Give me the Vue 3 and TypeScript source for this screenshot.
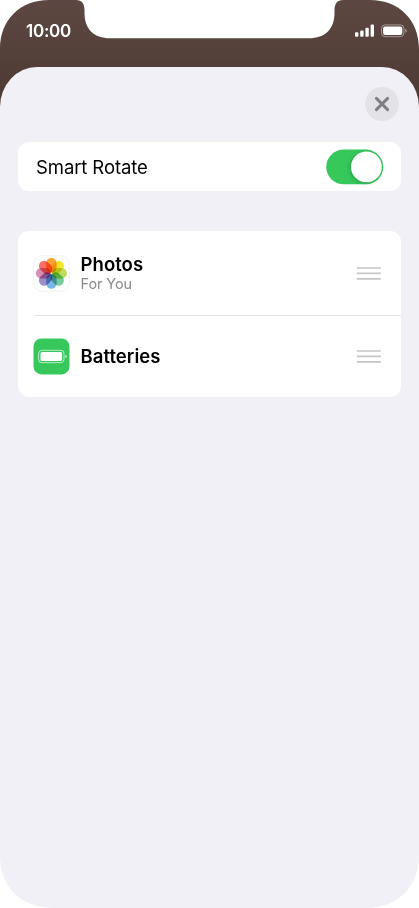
<script setup lang="ts">
import { ref } from 'vue'

interface Petal { angle: number; color: string }

const smartRotate = ref(true)
const petals: Petal[] = [
  { angle: 0, color: '#fba336' },
  { angle: 45, color: '#f4e52b' },
  { angle: 90, color: '#bcdb60' },
  { angle: 135, color: '#78ca9f' },
  { angle: 180, color: '#78b7e6' },
  { angle: 225, color: '#9d8fc6' },
  { angle: 270, color: '#d88eb5' },
  { angle: 315, color: '#f87065' },
]
const rows = [
  { id: 'photos', title: 'Photos', subtitle: 'For You' },
  { id: 'batteries', title: 'Batteries', subtitle: '' },
]
</script>

<template>
  <main class="phone">
    <header class="status">
      <span class="time">10:00</span>
      <span class="indicators">
        <svg width="20" height="14" viewBox="0 0 20 14" fill="#fff">
          <rect x="0" y="8.2" width="3.4" height="4.5" rx="1" />
          <rect x="5.2" y="6.4" width="3.4" height="6.3" rx="1" />
          <rect x="10.4" y="3.8" width="3.4" height="8.9" rx="1" />
          <rect x="15.6" y="0.6" width="3.4" height="12.1" rx="1" />
        </svg>
        <svg width="27" height="14" viewBox="0 0 27 14">
          <rect x="0.5" y="0.9" width="22.4" height="11.8" rx="3.5" fill="none" stroke="#fff" stroke-opacity=".45" />
          <rect x="2.1" y="2.5" width="19.2" height="8.6" rx="2" fill="#fff" />
          <path d="M24.4 4.8c1.8.7 1.8 3.3 0 4z" fill="#fff" fill-opacity=".5" />
        </svg>
      </span>
    </header>
    <section class="sheet">
      <div class="toolbar">
        <button class="close" aria-label="Close">
          <svg width="34" height="34" viewBox="0 0 34 34">
            <path d="M11.4 11.4 22.6 22.6M22.6 11.4 11.4 22.6" stroke="#7f7f83" stroke-width="2.9" stroke-linecap="round" />
          </svg>
        </button>
      </div>
      <div class="card setting">
        <span class="label">Smart Rotate</span>
        <button class="switch" :class="{ on: smartRotate }" role="switch" :aria-checked="smartRotate" @click="smartRotate = !smartRotate">
          <svg class="track" width="58" height="36" viewBox="0 0 58 36">
            <rect class="fill" x=".2" y=".6" width="57" height="34.6" rx="17.3" />
            <circle class="knob" cx="40.4" cy="17.9" r="15.4" fill="#fff" />
          </svg>
        </button>
      </div>
      <div class="card list">
        <div v-for="row in rows" :key="row.id" class="row" :class="row.id">
          <svg v-if="row.id === 'photos'" class="app" width="37" height="37" viewBox="0 0 37 37">
            <rect x=".8" y=".8" width="35.4" height="35.4" rx="8" fill="#fff" stroke="#ededef" stroke-width=".8" />
            <g transform="translate(18.4 18.2)">
              <rect
                v-for="petal in petals" :key="petal.angle" class="petal"
                x="-5.2" y="-15.5" width="10.4" height="14.8" rx="5.2"
                :fill="petal.color" :transform="`rotate(${petal.angle})`"
              />
            </g>
          </svg>
          <svg v-else class="app" width="37" height="37" viewBox="0 0 37 37">
            <rect x=".5" y=".4" width="36" height="36" rx="8" fill="#36c85b" />
            <rect x="5.6" y="12.3" width="25.4" height="12.4" rx="3.3" fill="none" stroke="#fff" stroke-opacity=".75" stroke-width=".9" />
            <rect x="7.5" y="14.1" width="21.6" height="8.8" rx="1.5" fill="#fff" />
            <path d="M32.5 16.8c1.7.5 1.7 3 0 3.5z" fill="#fff" fill-opacity=".8" />
          </svg>
          <div class="copy">
            <span class="title">{{ row.title }}</span>
            <span v-if="row.subtitle" class="subtitle">{{ row.subtitle }}</span>
          </div>
          <svg class="handle" width="25" height="15" viewBox="0 0 25 15">
            <path d="M.8 2h24M.8 7.4h24M.8 12.8h24" stroke="#c5c5c7" stroke-width="1.7" />
          </svg>
        </div>
      </div>
    </section>
    <svg class="bezel" width="419" height="908" viewBox="0 0 419 908" fill="#fff">
      <path d="M76 0C82 0 84.5 4 84.5 10V13C84.5 29 94 38.3 110 38.3H309C325 38.3 334.5 29 334.5 13V10C334.5 4 337 0 343 0Z" />
      <path d="M0 0H49C20 0 0 20 0 49Z" />
      <path d="M419 0H370C399 0 419 20 419 49Z" />
      <path d="M0 908V855C0 888 22 908 53 908Z" />
      <path d="M419 908V855C419 888 397 908 366 908Z" />
    </svg>
  </main>
</template>

<style>
body { margin: 0; background: #fff; }
</style>

<style scoped>
.phone {
  position: relative;
  display: flex;
  flex-direction: column;
  width: 419px;
  height: 908px;
  overflow: hidden;
  background: linear-gradient(#5d4742 0, #4c3932 110px);
  font-family: Inter, "Liberation Sans", sans-serif;
  color: #000;
}
.status {
  display: flex;
  justify-content: space-between;
  height: 67px;
  padding: 0 11px 0 26px;
  box-sizing: border-box;
  color: #fff;
}
.time { margin-top: 20px; font-size: 17px; line-height: 22px; font-weight: 600; letter-spacing: -.25px; }
.indicators { display: flex; gap: 6px; padding-top: 24px; }
.sheet {
  flex: 1;
  padding: 20px 18px 0;
  background: #f1f0f6;
  border-radius: 37px 37px 0 0 / 40px 40px 0 0;
}
.toolbar { display: flex; justify-content: flex-end; height: 55px; padding-right: 2px; }
button { border: 0; padding: 0; background: none; }
.close { width: 34px; height: 34px; border-radius: 50%; background: #e3e2e7; }
.close svg { display: block; }
.card { width: 383px; background: #fff; border-radius: 11px; }
.setting {
  display: flex;
  align-items: center;
  justify-content: space-between;
  height: 49px;
  padding: 0 17px 0 18px;
  box-sizing: border-box;
}
.label { font-size: 18.5px; letter-spacing: -.1px; }
.switch { width: 58px; height: 36px; }
.track { display: block; }
.fill { fill: #e9e9eb; }
.on .fill { fill: #36c85b; }
.knob { transform: translateX(-23px); filter: drop-shadow(-1px 1px 2px #0003); }
.on .knob { transform: none; }
.list { margin-top: 39.5px; height: 166px; overflow: hidden; }
.row { display: flex; align-items: center; box-sizing: border-box; padding: 0 20px 0 15px; }
.photos { height: 84.5px; padding-top: 1px; }
.batteries { height: 82px; margin-left: 16px; padding-left: 0; border-top: 1px solid #e3e3e5; }
.batteries .app { margin-left: -1px; }
.petal { mix-blend-mode: multiply; }
.copy { display: flex; flex: 1; flex-direction: column; margin-left: 10.5px; }
.title { font-size: 18.5px; line-height: 22px; font-weight: 600; letter-spacing: .06px; }
.batteries .title { padding-bottom: 1px; }
.subtitle { font-size: 14.5px; line-height: 18px; letter-spacing: -.1px; color: #8b8b8d; }
.bezel { position: absolute; inset: 0; pointer-events: none; }
</style>
